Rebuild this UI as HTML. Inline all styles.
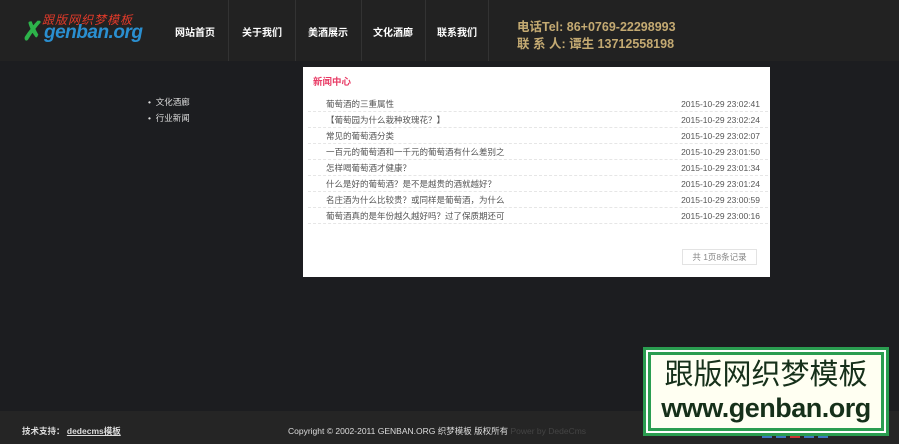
<!DOCTYPE html>
<html><head><meta charset="utf-8"><style>
*{margin:0;padding:0;box-sizing:border-box}
body{width:899px;height:444px;overflow:hidden;background:#1c1d20;font-family:"Liberation Sans","Noto Sans CJK SC",sans-serif;position:relative}
.hdr{position:absolute;left:0;top:0;width:899px;height:61px;background:#222222}
.sep{position:absolute;top:0;width:1px;height:61px;background:#333}
.nav{position:absolute;top:24px;color:#fff;font-size:10px;font-weight:bold;width:66px;text-align:center}
.tel{position:absolute;left:517px;color:#c4aa72;font-size:12.5px;font-weight:bold}
.panel{position:absolute;left:303px;top:67px;width:467px;height:210px;background:#fff}
.row{position:absolute;left:5px;width:460px;height:16px;border-bottom:1px dashed #e6e6e6;font-size:8.5px;color:#555;line-height:16px}
.row span{position:absolute;left:18px}
.row b{position:absolute;right:8px;font-weight:normal}
.foot{position:absolute;left:0;top:411px;width:899px;height:33px;background:#252525;color:#ddd;font-size:8.5px}
.badge{position:absolute;left:643px;top:347px;width:246px;height:89px;background:#2a9d50;padding:3px}
.bi{width:100%;height:100%;background:#fff;padding:2px}
.bc{width:100%;height:100%;border:3px solid #2a9d50;background:#fffff2;text-align:center;color:#16301a}
.ic{position:absolute;top:430px;width:10px;height:8px;background:#3a78c0}
</style></head><body>
<div class="hdr">
<div style="position:absolute;top:11px;color:#e03a2a;font-size:12px;font-style:italic;letter-spacing:1px;left:42px">跟版网织梦模板</div>
<div style="position:absolute;left:22px;top:16px;color:#2db34a;font-size:26px;font-weight:bold">✗</div>
<div style="position:absolute;left:44px;top:22px;color:#2a8fd0;font-size:19px;font-weight:bold;font-style:italic;letter-spacing:-0.5px">genban.org</div>
<div class="sep" style="left:228px"></div><div class="sep" style="left:295px"></div><div class="sep" style="left:361px"></div><div class="sep" style="left:425px"></div><div class="sep" style="left:488px"></div>
<div class="nav" style="left:162px">网站首页</div>
<div class="nav" style="left:229px">关于我们</div>
<div class="nav" style="left:295px">美酒展示</div>
<div class="nav" style="left:360px">文化酒廊</div>
<div class="nav" style="left:424px">联系我们</div>
<div class="tel" style="top:16px">电话Tel: 86+0769-22298993</div>
<div class="tel" style="top:33px">联 系 人: 谭生 13712558198</div>
</div>
<div style="position:absolute;left:148px;top:94px;color:#ddd;font-size:8.5px;line-height:16px">• &nbsp;文化酒廊<br>• &nbsp;行业新闻</div>
<div class="panel">
<div style="position:absolute;left:10px;top:7px;color:#e83a64;font-size:9.5px;font-weight:bold">新闻中心</div>
<div class="row" style="top:29px"><span>葡萄酒的三重属性</span><b>2015-10-29 23:02:41</b></div>
<div class="row" style="top:45px"><span>【葡萄园为什么栽种玫瑰花？】</span><b>2015-10-29 23:02:24</b></div>
<div class="row" style="top:61px"><span>常见的葡萄酒分类</span><b>2015-10-29 23:02:07</b></div>
<div class="row" style="top:77px"><span>一百元的葡萄酒和一千元的葡萄酒有什么差别之</span><b>2015-10-29 23:01:50</b></div>
<div class="row" style="top:93px"><span>怎样喝葡萄酒才健康？</span><b>2015-10-29 23:01:34</b></div>
<div class="row" style="top:109px"><span>什么是好的葡萄酒？是不是越贵的酒就越好？</span><b>2015-10-29 23:01:24</b></div>
<div class="row" style="top:125px"><span>名庄酒为什么比较贵？或同样是葡萄酒，为什么</span><b>2015-10-29 23:00:59</b></div>
<div class="row" style="top:141px"><span>葡萄酒真的是年份越久越好吗？过了保质期还可</span><b>2015-10-29 23:00:16</b></div>
<div style="position:absolute;left:379px;top:182px;width:75px;height:16px;border:1px solid #e3e3e3;font-size:8.5px;color:#888;text-align:center;line-height:14px">共 1页8条记录</div>
</div>
<div class="foot">
<div style="position:absolute;left:22px;top:14px;font-weight:bold">技术支持： <u>dedecms模板</u></div>
<div style="position:absolute;left:288px;top:14px">Copyright © 2002-2011 GENBAN.ORG 织梦模板 版权所有 <span style="color:#444">Power by DedeCms</span></div>
</div>
<div class="ic" style="left:762px"></div><div class="ic" style="left:776px"></div><div class="ic" style="left:790px;background:#c33"></div><div class="ic" style="left:804px"></div><div class="ic" style="left:818px"></div>
<div class="badge"><div class="bi"><div class="bc">
<div style="font-size:29px;line-height:34px;margin-top:3px">跟版网织梦模板</div>
<div style="font-size:27px;line-height:32px;font-weight:bold;letter-spacing:-0.5px">www.genban.org</div>
</div></div></div>
</body></html>
